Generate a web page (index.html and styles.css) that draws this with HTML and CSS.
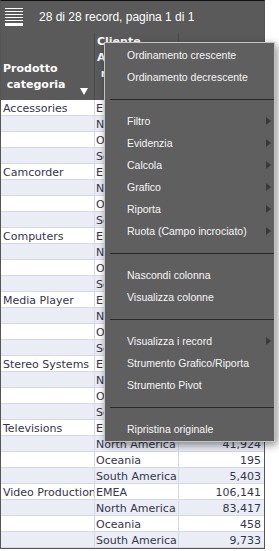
FILE: index.html
```html
<!DOCTYPE html>
<html lang="it">
<head>
<meta charset="utf-8">
<title>Report</title>
<link rel="stylesheet" href="styles.css">
</head>
<body>
<div class="page">
  <div class="grid">
    <div class="topbar">
      <svg class="menu-icon" width="18" height="19" viewBox="0 0 18 19">
        <rect x="0" y="0" width="18" height="1" fill="#fff"/>
        <rect x="0" y="3" width="18" height="1" fill="#fff"/>
        <rect x="0" y="6" width="18" height="1" fill="#fff"/>
        <rect x="0" y="9" width="18" height="1" fill="#fff"/>
        <rect x="0" y="12" width="18" height="1" fill="#fff"/>
        <rect x="0" y="15" width="18" height="3" fill="#fff"/>
      </svg>
      <span class="count">28 di 28 record, pagina 1 di 1</span>
    </div>
    <div class="head">
      <div class="hcell hc1"><div class="htext">Prodotto<br>&nbsp;categoria</div><span class="sort"></span></div>
      <div class="hcell hc2"><div class="htext">Cliente<br>Area<br>&nbsp;regione</div></div>
      <div class="hcell hc3"><div class="htext">Ricavi</div></div>
    </div>
    <div class="rows">
      <div class="row"><div class="c c1">Accessories</div><div class="c c2">EMEA</div><div class="c c3">129,085</div></div>
      <div class="row"><div class="c c1"></div><div class="c c2">North America</div><div class="c c3">81,264</div></div>
      <div class="row"><div class="c c1"></div><div class="c c2">Oceania</div><div class="c c3">302</div></div>
      <div class="row"><div class="c c1"></div><div class="c c2">South America</div><div class="c c3">7,410</div></div>
      <div class="row"><div class="c c1">Camcorder</div><div class="c c2">EMEA</div><div class="c c3">198,377</div></div>
      <div class="row"><div class="c c1"></div><div class="c c2">North America</div><div class="c c3">140,528</div></div>
      <div class="row"><div class="c c1"></div><div class="c c2">Oceania</div><div class="c c3">812</div></div>
      <div class="row"><div class="c c1"></div><div class="c c2">South America</div><div class="c c3">12,906</div></div>
      <div class="row"><div class="c c1">Computers</div><div class="c c2">EMEA</div><div class="c c3">87,330</div></div>
      <div class="row"><div class="c c1"></div><div class="c c2">North America</div><div class="c c3">61,045</div></div>
      <div class="row"><div class="c c1"></div><div class="c c2">Oceania</div><div class="c c3">276</div></div>
      <div class="row"><div class="c c1"></div><div class="c c2">South America</div><div class="c c3">4,918</div></div>
      <div class="row"><div class="c c1">Media Player</div><div class="c c2">EMEA</div><div class="c c3">154,702</div></div>
      <div class="row"><div class="c c1"></div><div class="c c2">North America</div><div class="c c3">112,389</div></div>
      <div class="row"><div class="c c1"></div><div class="c c2">Oceania</div><div class="c c3">641</div></div>
      <div class="row"><div class="c c1"></div><div class="c c2">South America</div><div class="c c3">9,127</div></div>
      <div class="row"><div class="c c1">Stereo Systems</div><div class="c c2">EMEA</div><div class="c c3">93,814</div></div>
      <div class="row"><div class="c c1"></div><div class="c c2">North America</div><div class="c c3">70,255</div></div>
      <div class="row"><div class="c c1"></div><div class="c c2">Oceania</div><div class="c c3">388</div></div>
      <div class="row"><div class="c c1"></div><div class="c c2">South America</div><div class="c c3">6,041</div></div>
      <div class="row"><div class="c c1">Televisions</div><div class="c c2">EMEA</div><div class="c c3">58,606</div></div>
      <div class="row"><div class="c c1"></div><div class="c c2">North America</div><div class="c c3">41,924</div></div>
      <div class="row"><div class="c c1"></div><div class="c c2">Oceania</div><div class="c c3">195</div></div>
      <div class="row"><div class="c c1"></div><div class="c c2">South America</div><div class="c c3">5,403</div></div>
      <div class="row"><div class="c c1">Video Production</div><div class="c c2">EMEA</div><div class="c c3">106,141</div></div>
      <div class="row"><div class="c c1"></div><div class="c c2">North America</div><div class="c c3">83,417</div></div>
      <div class="row"><div class="c c1"></div><div class="c c2">Oceania</div><div class="c c3">458</div></div>
      <div class="row"><div class="c c1"></div><div class="c c2">South America</div><div class="c c3">9,733</div></div>
    </div>
  </div>

  <div class="menu">
    <div class="mi">Ordinamento crescente</div>
    <div class="mi">Ordinamento decrescente</div>
    <div class="sep"></div>
    <div class="mi sub">Filtro</div>
    <div class="mi sub">Evidenzia</div>
    <div class="mi sub">Calcola</div>
    <div class="mi sub">Grafico</div>
    <div class="mi sub">Riporta</div>
    <div class="mi sub">Ruota (Campo incrociato)</div>
    <div class="sep"></div>
    <div class="mi">Nascondi colonna</div>
    <div class="mi">Visualizza colonne</div>
    <div class="sep"></div>
    <div class="mi sub">Visualizza i record</div>
    <div class="mi">Strumento Grafico/Riporta</div>
    <div class="mi">Strumento Pivot</div>
    <div class="sep"></div>
    <div class="mi">Ripristina originale</div>
  </div>
</div>
</body>
</html>
```

FILE: styles.css
```css
html, body {
  margin: 0;
  padding: 0;
  background: #ffffff;
}

.page {
  position: relative;
  width: 279px;
  height: 551px;
  overflow: hidden;
  font-family: "DejaVu Sans", sans-serif;
}

.grid {
  width: 263px;
  border: 1px solid #555555;
  border-top-color: #111111;
}

.topbar {
  height: 32px;
  background: #5a5a5a;
  display: flex;
  align-items: center;
  padding-left: 4px;
  gap: 16px;
  color: #ffffff;
  font-family: "Liberation Sans", Arial, sans-serif;
  font-size: 12px;
}

.menu-icon {
  display: block;
  flex: none;
}

.head {
  display: grid;
  grid-template-columns: 94px 84px 85px;
  height: 67px;
  background: #5a5a5a;
  color: #ffffff;
  font-family: "DejaVu Sans", sans-serif;
  font-weight: bold;
  font-size: 11px;
  line-height: 16px;
}

.hcell {
  display: flex;
  border-right: 1px solid #4b4b4b;
  padding-left: 2px;
  overflow: hidden;
}

.hc3 {
  border-right: none;
  padding-top: 26px;
}

.hc1 {
  padding-top: 28px;
}

.hc2 {
  padding-top: 1px;
}

.htext {
  white-space: nowrap;
}

.sort {
  margin-left: auto;
  margin-right: 6px;
  margin-bottom: 5px;
  align-self: flex-end;
  width: 0;
  height: 0;
  border-top: 7px solid #ffffff;
  border-left: 4px solid transparent;
  border-right: 4px solid transparent;
}

.rows {
  display: flex;
  flex-direction: column;
}

.row {
  display: grid;
  grid-template-columns: 94px 84px 85px;
  height: 16px;
  background: #ffffff;
}

.row:nth-child(even) {
  background: #ebedf6;
}

.c {
  box-sizing: border-box;
  height: 16px;
  padding: 1px 3px 0;
  border-bottom: 1px solid #d6d8e2;
  border-right: 1px solid #d6d8e2;
  font-size: 11px;
  line-height: 15px;
  color: #35354a;
  white-space: nowrap;
  overflow: hidden;
}

.c1 {
  padding-left: 2px;
}

.c2 {
  padding-left: 1px;
}

.c3 {
  border-right: none;
  text-align: right;
}

/* context menu overlay */
.menu {
  position: absolute;
  left: 104px;
  top: 42px;
  width: 169px;
  padding: 1px 0;
  background: #5f5f5f;
  border: 1px solid #c4c4c4;
  box-shadow: 2px 3px 8px rgba(0, 0, 0, 0.45);
  font-family: "Liberation Sans", Arial, sans-serif;
  font-size: 10.5px;
  color: #f6f6f6;
}

.mi {
  height: 22px;
  display: flex;
  align-items: center;
  padding-left: 22px;
  white-space: nowrap;
}

.sub::after {
  content: "";
  margin-left: auto;
  margin-right: 3px;
  width: 0;
  height: 0;
  border-left: 5px solid #3a3a3a;
  border-top: 4px solid transparent;
  border-bottom: 4px solid transparent;
}

.sep {
  height: 22px;
  box-sizing: border-box;
  padding-top: 11px;
}

.sep::before {
  content: "";
  display: block;
  height: 1px;
  margin-left: 5px;
  background: #2a2a2a;
}
```
